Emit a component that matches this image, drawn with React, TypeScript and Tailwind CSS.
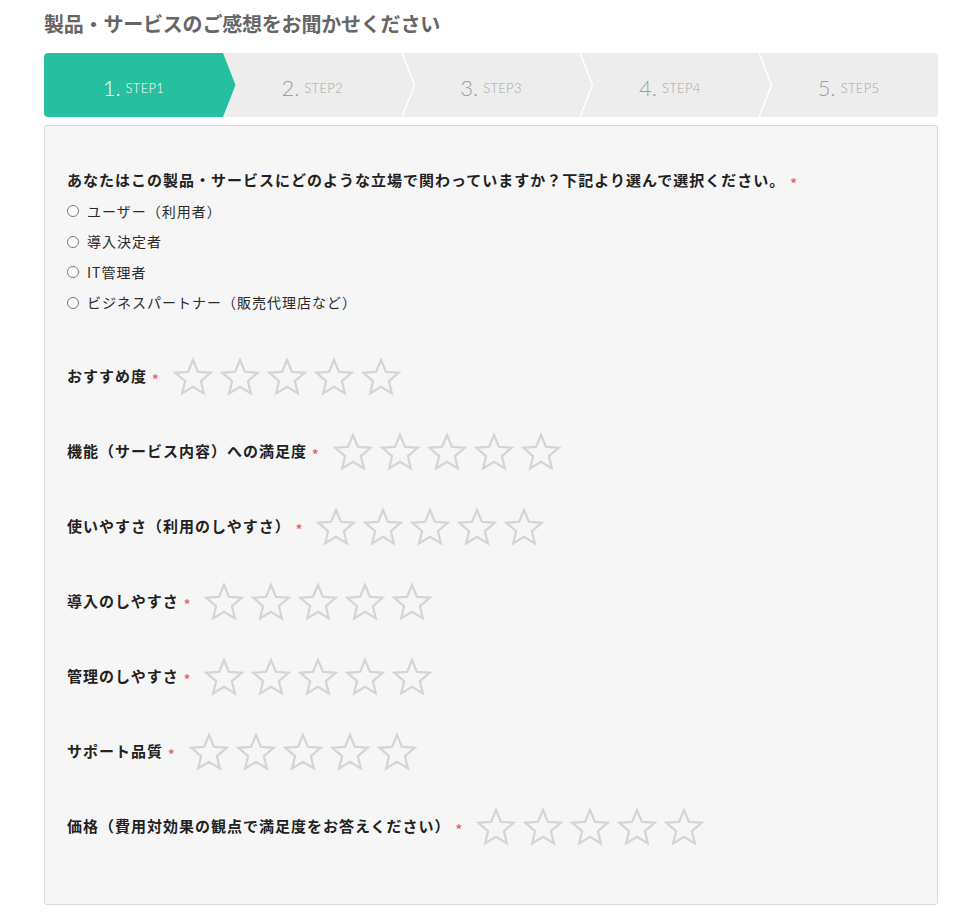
import React from "react";

const jp = { fontFamily: '"Noto Sans CJK JP", "Noto Sans", sans-serif' };

const steps = ["STEP1", "STEP2", "STEP3", "STEP4", "STEP5"];

const roles = ["ユーザー（利用者）", "導入決定者", "IT管理者", "ビジネスパートナー（販売代理店など）"];

const ratings = [
  "おすすめ度",
  "機能（サービス内容）への満足度",
  "使いやすさ（利用のしやすさ）",
  "導入のしやすさ",
  "管理のしやすさ",
  "サポート品質",
  "価格（費用対効果の観点で満足度をお答えください）",
];

function Star() {
  return (
    <svg width="40" height="40" viewBox="0 0 40 40" className="shrink-0">
      <polygon
        points="20,3 24.88,14.79 37.6,15.78 27.89,24.06 30.87,36.47 20,29.8 9.13,36.47 12.11,24.06 2.4,15.78 15.12,14.79"
        fill="none"
        stroke="#d4d4d4"
        strokeWidth="2.2"
        strokeLinejoin="miter"
      />
    </svg>
  );
}

function Required() {
  return <span className="ml-[5px] text-[13px] font-bold leading-none text-[#e8656a] translate-y-[2px]">*</span>;
}

function StepBar() {
  return (
    <div className="flex h-16 overflow-hidden rounded-[4px] bg-[#ededed]" style={{ fontFamily: "Lato, sans-serif" }}>
      {steps.map((s, i) => {
        const active = i === 0;
        return (
          <div
            key={s}
            className={`relative flex flex-1 items-center justify-center pt-[5px] ${active ? "bg-[#26bfa0] rounded-l-[4px] z-10" : ""}`}
          >
            <span className={`text-[22px] font-light ${active ? "text-white" : "text-[#9d9d9d]"}`}>{i + 1}.</span>
            <span className={`ml-[5px] mt-[3px] text-[13px] font-light tracking-[0.3px] ${active ? "text-white" : "text-[#a8a8a8]"}`}>
              {s}
            </span>
            {active && (
              <svg width="13" height="64" viewBox="0 0 13 64" className="absolute left-full top-0">
                <polygon points="0,0 12.5,32 0,64" fill="#26bfa0" />
              </svg>
            )}
            {i > 1 && (
              <svg width="14" height="64" viewBox="0 0 14 64" className="absolute left-0 top-0">
                <polyline points="0,0 12.5,32 0,64" fill="none" stroke="#ffffff" strokeWidth="1.5" />
              </svg>
            )}
          </div>
        );
      })}
    </div>
  );
}

export default function App() {
  return (
    <div className="min-h-screen bg-white pt-[10px] ml-[44px] mr-[20px]" style={jp}>
      <h1 className="text-[20px] font-bold leading-[28px] text-[#666666] tracking-[-0.2px]">製品・サービスのご感想をお聞かせください</h1>

      <div className="mt-[15px]">
        <StepBar />
      </div>

      <div className="mt-2 rounded-[3px] border border-[#d6d8db] bg-[#f6f6f6] px-[22px] pb-[40px] pt-[43px]">
        <div className="flex items-center text-[15px] font-bold leading-[22px] tracking-[1px] text-[#222222]">
          あなたはこの製品・サービスにどのような立場で関わっていますか？下記より選んで選択ください。
          <Required />
        </div>

        <div className="mt-[5px] flex flex-col">
          {roles.map((r) => (
            <label key={r} className="flex h-[30.5px] items-center text-[14px] tracking-[1px] text-[#2a2a2a]">
              <span className="h-[12px] w-[12px] shrink-0 rounded-full border border-[#7a7a7a] bg-white" />
              <span className="ml-[8px]">{r}</span>
            </label>
          ))}
        </div>

        <div className="mt-[21px] flex flex-col">
          {ratings.map((r) => (
            <div key={r} className="flex h-[75px] items-center">
              <span className="text-[15px] font-bold tracking-[1px] text-[#222222]">{r}</span>
              <Required />
              <div className="ml-[14px] flex gap-[7px]">
                {[0, 1, 2, 3, 4].map((n) => (
                  <Star key={n} />
                ))}
              </div>
            </div>
          ))}
        </div>
      </div>
    </div>
  );
}
